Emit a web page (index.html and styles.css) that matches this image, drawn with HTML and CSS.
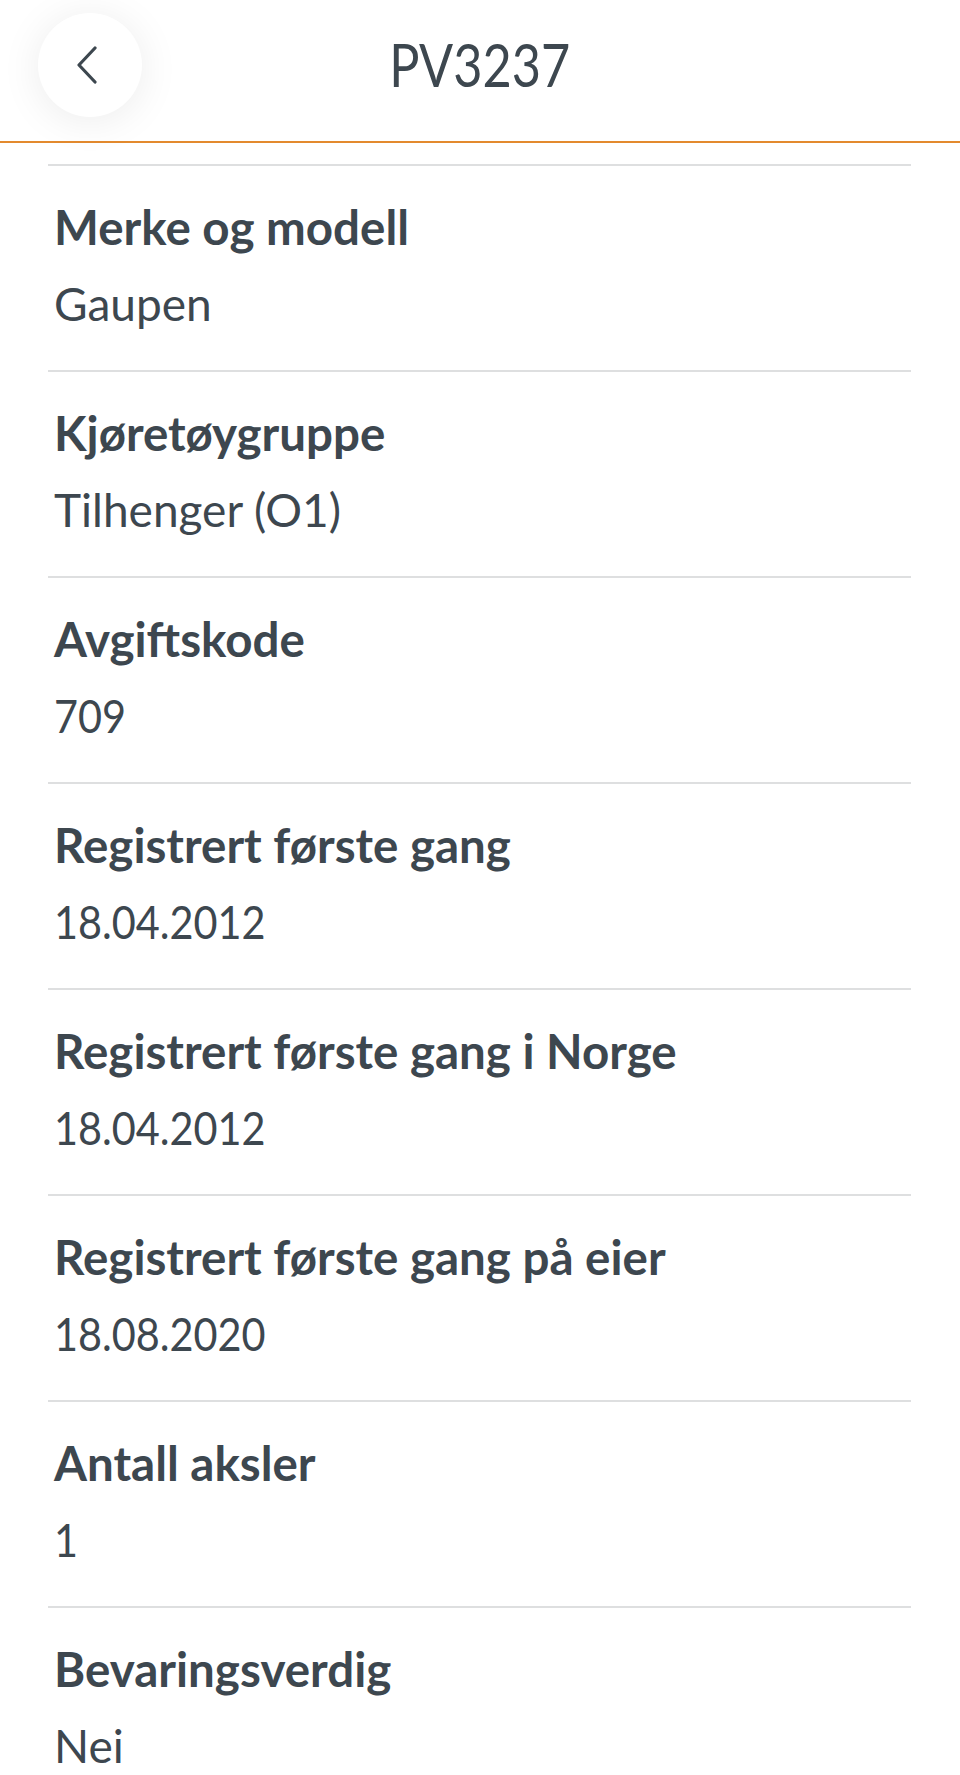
FILE: index.html
```html
<!DOCTYPE html>
<html lang="no">
<head>
  <meta charset="UTF-8">
  <meta name="viewport" content="width=device-width, initial-scale=1.0">
  <title>PV3237</title>
  <link rel="stylesheet" href="styles.css">
</head>
<body>
  <header class="topbar">
    <button class="back" aria-label="Tilbake">
      <svg width="24" height="38" viewBox="0 0 24 38"><path d="M20 2 L4 19 L20 36" fill="none" stroke="#3d474f" stroke-width="3.2" stroke-linecap="round" stroke-linejoin="round"/></svg>
    </button>
    <h1>PV3237</h1>
  </header>
  <main class="details">
    <ul class="list">
      <li class="item"><div class="label">Merke og modell</div><div class="value">Gaupen</div></li>
      <li class="item"><div class="label">Kjøretøygruppe</div><div class="value">Tilhenger (O1)</div></li>
      <li class="item"><div class="label">Avgiftskode</div><div class="value"><span class="num">709</span></div></li>
      <li class="item"><div class="label">Registrert første gang</div><div class="value"><span class="num">18.04.2012</span></div></li>
      <li class="item"><div class="label">Registrert første gang i Norge</div><div class="value"><span class="num">18.04.2012</span></div></li>
      <li class="item"><div class="label">Registrert første gang på eier</div><div class="value"><span class="num">18.08.2020</span></div></li>
      <li class="item"><div class="label">Antall aksler</div><div class="value"><span class="num">1</span></div></li>
      <li class="item"><div class="label">Bevaringsverdig</div><div class="value">Nei</div></li>
    </ul>
  </main>
</body>
</html>
```

FILE: styles.css
```css
* { box-sizing: border-box; }
body { margin: 0; font-family: Lato, "Open Sans", sans-serif; color: #3d474f; background: #fff; overflow: hidden; }
.topbar { height: 143px; display: flex; align-items: center; justify-content: center; position: relative; border-bottom: 2px solid #e38a2e; background: #fff; }
.topbar h1 { margin: 0 0 14px; font-weight: 400; font-size: 60px; line-height: 1; transform: scaleX(0.84); }
.back { position: absolute; left: 38px; top: 13px; width: 104px; height: 104px; border-radius: 50%; border: none; background: #fff; box-shadow: 0 4px 40px rgba(0, 0, 0, 0.08); display: flex; align-items: center; justify-content: center; padding: 0 6px 0 0; }
.details { padding: 21px 49px 0 48px; }
.list { list-style: none; margin: 0; padding: 0; }
.item { border-top: 2px solid #dedfe0; padding: 33px 6px 38px; }
.label { font-weight: 700; font-size: 47.5px; line-height: 56px; }
.value { font-size: 46px; line-height: 56px; margin-top: 21px; }
.num { display: inline-block; transform: scaleX(0.9); transform-origin: left center; }
```
